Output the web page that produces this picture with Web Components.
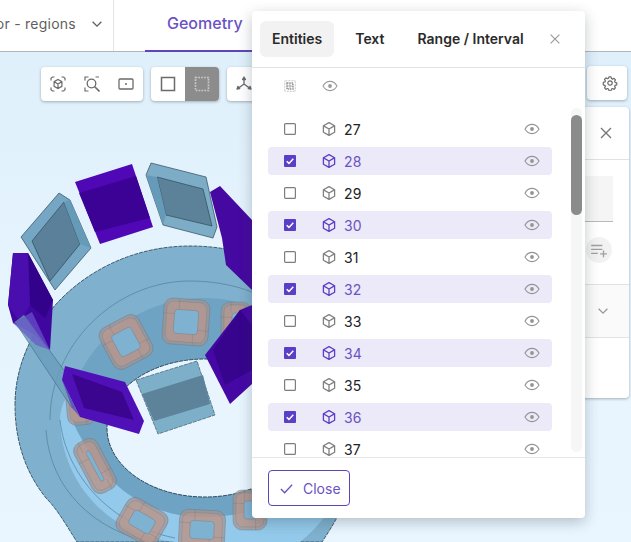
<!DOCTYPE html>
<html lang="en">
<head>
<meta charset="utf-8">
<title>Geometry</title>
<style>
  html, body { margin: 0; height: 100%; }
  body { font-family: Inter, "Liberation Sans", sans-serif; overflow: hidden; }
</style>
</head>
<body>
<app-shell></app-shell>
<script>
const ICONS = {
  cube: '<path d="M8 1.600l5.600 3.200v6.400L8 14.400l-5.600-3.200V4.800z M2.600 4.900L8 8l5.400-3.100 M8 8v6.200" fill="none" stroke="currentColor" stroke-width="1.300" stroke-linejoin="round"/>',
  eye: '<path d="M1 8c1.700-3 4.100-4.600 7-4.600s5.300 1.600 7 4.600c-1.700 3-4.100 4.600-7 4.600S2.700 11 1 8z" fill="none" stroke="currentColor" stroke-width="1.100"/><circle cx="8" cy="8" r="1.900" fill="currentColor"/>',
  close: '<path d="M3 3l10 10M13 3L3 13" fill="none" stroke="currentColor" stroke-width="1.400"/>',
  check: '<path d="M2 8.500l4 4L14 4" fill="none" stroke="currentColor" stroke-width="1.400"/>',
  chevron: '<path d="M3 5.500l5 5 5-5" fill="none" stroke="currentColor" stroke-width="1.500"/>',
  gear: '<path d="M6.800 1.300h2.400l.4 1.900 1.200.6 1.700-.9 1.600 1.700-1 1.600.5 1.200 1.900.5v2.300l-1.900.5-.5 1.200 1 1.600-1.600 1.700-1.700-.9-1.200.5-.4 1.900H6.800l-.4-1.900-1.200-.5-1.700.9-1.600-1.700 1-1.600-.5-1.200-1.900-.5V7.400l1.900-.5.500-1.200-1-1.600 1.600-1.700 1.700.9 1.200-.6z" transform="translate(.8 .7) scale(.9)" fill="none" stroke="currentColor" stroke-width="1.300" stroke-linejoin="round"/><circle cx="8" cy="8" r="2.200" fill="none" stroke="currentColor" stroke-width="1.200"/>',
  fitCube: '<path d="M1 4.500V2.200L2.500 1H4.500M11.500 1h2L15 2.200v2.300M15 11.500v2.300L13.500 15h-2M4.500 15h-2L1 13.800v-2.300" fill="none" stroke="currentColor" stroke-width="1.200"/><path d="M8 3.500l3.900 2.200v4.600L8 12.500l-3.900-2.200V5.700zM4.200 5.800L8 8l3.800-2.200M8 8v4.400" fill="none" stroke="currentColor" stroke-width="1.200"/>',
  zoomFit: '<path d="M1 4.500V1h3.500M11.500 1H15M1 11.500V15h3.500" fill="none" stroke="currentColor" stroke-width="1.200"/><circle cx="7.500" cy="7.500" r="4.300" fill="none" stroke="currentColor" stroke-width="1.300"/><path d="M10.700 10.700L15.500 15.500" fill="none" stroke="currentColor" stroke-width="1.600"/>',
  frame: '<rect x="1" y="3" width="14" height="10" rx="1" fill="none" stroke="currentColor" stroke-width="1.300"/><circle cx="8" cy="8" r="1" fill="currentColor"/>',
  solid: '<rect x="1.500" y="1.500" width="13" height="13" fill="none" stroke="currentColor" stroke-width="1.500"/>',
  dashed: '<rect x="1.500" y="1.500" width="13" height="13" fill="none" stroke="currentColor" stroke-width="1.700" stroke-dasharray="1.700 1.150"/>',
  dots: '<rect x="1" y="1" width="14" height="14" fill="none" stroke="currentColor" stroke-width="1" stroke-dasharray="1 1"/><path d="M4 4h8v8H4z" fill="none" stroke="currentColor" stroke-width="2.200" stroke-dasharray="2 1"/><path d="M4 8h8M8 4v8" stroke="currentColor" stroke-width="1"/>',
  axes: '<path d="M8 8V2M8 8l-6 4.500M8 8l6 4.500M8 1L6.500 3.500h3zM1 13l1-2.700 1.700 2.200zM15 13l-1-2.700-1.700 2.200z" fill="none" stroke="currentColor" stroke-width="1.300" stroke-linejoin="round"/>',
  addList: '<path d="M1 4h10M1 7.500h10M1 11h6M9 11.500h6M12 8.500v6" fill="none" stroke="currentColor" stroke-width="1.200"/>'
};

class UiIcon extends HTMLElement {
  connectedCallback() {
    const size = this.getAttribute('size') || 16;
    this.attachShadow({ mode: 'open' }).innerHTML = `
      <style>:host { display: inline-flex; flex: none; } svg { display: block; }</style>
      <svg width="${size}" height="${size}" viewBox="0 0 16 16">${ICONS[this.getAttribute('name')]}</svg>`;
  }
}

class AppHeader extends HTMLElement {
  constructor() {
    super();
    this.attachShadow({ mode: 'open' }).innerHTML = `
      <style>
        :host { display: flex; height: 51px; background: #fff; border-bottom: 1px solid #b4b6b8; box-sizing: content-box; }
        .select { width: 114px; flex: none; display: flex; justify-content: flex-end; align-items: center; gap: 14px;
                  padding-right: 9px; box-sizing: border-box; border-right: 1px solid #e4e4e4; overflow: hidden;
                  color: #5f5f5f; font-size: 14px; white-space: nowrap; letter-spacing: .25px; padding-bottom: 4px; }
        .tab { margin-left: 31px; width: 107px; padding-left: 22px; box-sizing: border-box; height: 52px; margin-bottom: -1px;
               border-bottom: 2px solid #5f45b8; color: #6a52c4; font-size: 16px; font-weight: 500; line-height: 47px; white-space: nowrap; }
      </style>
      <div class="select"><span>Color - regions</span><ui-icon name="chevron" size="14"></ui-icon></div>
      <div class="tab">Geometry</div>`;
  }
}

class ToolGroup extends HTMLElement {
  constructor() {
    super();
    this.attachShadow({ mode: 'open' }).innerHTML = `
      <style>
        :host { display: flex; height: 34px; background: #fff; border-radius: 4px; overflow: hidden; color: #666;
                box-shadow: 0 1px 3px rgba(60,70,80,.4); }
      </style>
      <slot></slot>`;
  }
}

class ToolButton extends HTMLElement {
  constructor() {
    super();
    this.attachShadow({ mode: 'open' }).innerHTML = `
      <style>
        :host { display: flex; width: 34px; height: 34px; align-items: center; justify-content: center; color: #6b6b6b; }
        :host([active]) { background: #8c8c8c; color: #c9c9c9; }
      </style>
      <slot></slot>`;
  }
}

class ModelView extends HTMLElement {
  constructor() {
    super();
    const coil = (x, y, w, h, r) => `<g transform="translate(${x} ${y}) rotate(${r})">
        <rect x="${-w/2}" y="${-h/2}" width="${w}" height="${h}" rx="9" fill="#a3928f" fill-opacity=".7" stroke="#6f6f78" stroke-opacity=".45" stroke-width=".8"/>
        <rect x="${-w/2+3}" y="${-h/2+3}" width="${w-6}" height="${h-6}" rx="7" fill="#c29a8c" fill-opacity=".6" stroke="#7c6f70" stroke-opacity=".35" stroke-width=".7"/>
        <rect x="${-w/2+11}" y="${-h/2+11}" width="${w-22}" height="${h-22}" rx="3" fill="#7fb2d0" stroke="#6f6a70" stroke-opacity=".45" stroke-width=".7"/>
        <path d="M${-w/2} ${-h/6}H${-w/2+11}M${w/2-11} ${h/6}H${w/2}M${-w/6} ${-h/2}V${-h/2+11}M${w/6} ${h/2-11}V${h/2}" stroke="#6f6a70" stroke-opacity=".35" stroke-width=".7"/>
      </g>`;
    this.attachShadow({ mode: 'open' }).innerHTML = `
      <style>
        :host { position: absolute; inset: 0; display: block; }
        svg { display: block; }
      </style>
      <svg width="631" height="490" viewBox="0 52 631 490">
        <!-- outer ring -->
        <path d="M15 405C15 322 92 246 190 246C285 246 350 305 362 400C367 460 350 500 322 542H77C66 525 58 510 46 498C25 472 15 440 15 405Z" fill="#7fb0cd" stroke="#27404f" stroke-width=".8" stroke-dasharray="4 1"/>
        <path d="M50 420C50 345 115 281 190 281C270 281 330 330 345 400" fill="none" stroke="#55809b" stroke-width=".7"/>
        <path d="M46 430C50 490 95 530 150 542" fill="none" stroke="#55809b" stroke-width=".7"/>
        <!-- inner wall, light crescent and rim round the hole -->
        <path d="M60 420C62 485 110 535 175 542H300C340 510 350 470 345 420C300 330 190 320 130 350C90 370 60 390 60 420Z" fill="#93c9ea"/>
        <path d="M70 400C85 340 140 298 205 298C270 298 325 345 330 428C325 480 275 517 205 517C150 517 112 490 88 450C76 430 68 415 70 400Z" fill="#6fa3c3"/>
        <path d="M60 420C66 475 110 525 175 538" fill="none" stroke="#53809c" stroke-width=".7"/>
        <!-- hole -->
        <ellipse cx="205" cy="428" rx="98" ry="69" fill="#e8f5fe" stroke="#1f3a4b" stroke-width=".9" stroke-dasharray="4 1"/>
        <!-- coils -->
        ${coil(186, 322, 46, 46, 4)}
        ${coil(126, 342, 44, 46, -28)}
        ${coil(236, 325, 30, 46, 0)}
        ${coil(80, 400, 28, 50, -5)}
        ${coil(95, 466, 26, 56, -28)}
        ${coil(142, 522, 46, 38, 30)}
        ${coil(202, 530, 46, 40, 3)}
        ${coil(250, 510, 34, 40, 0)}
        <!-- top blue blocks -->
        <g stroke="#2f4a5a" stroke-width=".7">
          <path d="M59 193L70 200L91 248L55 290L21 237Z" fill="#75a6c3"/>
          <path d="M32 241L64 202L80 244L50 281Z" fill="#5a8199"/>
          <path d="M64 202L70 200L91 248L80 244Z" fill="#659ab8" stroke="none"/>
          <path d="M151 163L206 177L217 227L213 238L163 225L146 175Z" fill="#7dacc7"/>
          <path d="M157 177L203 189L212 226L166 215Z" fill="#5b8299"/>
          <path d="M146 175L157 177L166 215L163 225Z" fill="#659ab8" stroke="none"/>
        </g>
        <!-- purple blocks -->
        <path d="M75 182L132 164L153 227L100 244Z" fill="#5008b6"/>
        <path d="M79 193L136 176L150 218L95 232Z" fill="#3c0296"/>
        <path d="M210 192L220 186L252 220V290L226 265L222 238Z" fill="#4508a0"/>
        <path d="M13 253H28L53 300L50 350L35 335L13 323L8 305Z" fill="#3f06a0"/>
        <path d="M28 253L53 300L45 318L30 305Z" fill="#33028a"/>
        <path d="M13 253L28 253L30 305L20 322L8 305Z" fill="#4a0eaf"/>
        <path d="M240 310L252 305V384L230 404L205 355Z" fill="#4508a5"/>
        <path d="M240 310L252 325V370L225 385L213 350Z" fill="#36048d"/>
        <!-- thin plate on the left -->
        <path d="M15 322L24 315L84 398L72 408Z" fill="#6b9dbc" fill-opacity=".85" stroke="#40697f" stroke-width=".6"/>
        <path d="M13 323L32 312L50 350L36 345Z" fill="#6a55c8" fill-opacity=".7"/>
        <!-- lower purple block -->
        <path d="M65 366L125 382L144 421L139 434L80 417L62 380Z" fill="#5010b8"/>
        <path d="M72 374L122 392L134 420L84 408Z" fill="#3c058f"/>
        <path d="M62 380L80 417L72 408Z" fill="#5a4ac0" fill-opacity=".8"/>
        <!-- front blue block -->
        <path d="M136 380L197 361L215 415L158 434Z" fill="#7eafc9" stroke="#2f4a5a" stroke-width=".6" stroke-dasharray="4 1"/>
        <path d="M142 394L203 375L210 404L154 421Z" fill="#5c8399"/>
      </svg>`;
  }
}

class SidePanel extends HTMLElement {
  constructor() {
    super();
    this.attachShadow({ mode: 'open' }).innerHTML = `
      <style>
        :host { position: absolute; left: 560px; top: 55px; width: 69px; height: 291px; display: flex; flex-direction: column;
                background: #fff; border-radius: 4px; box-shadow: 0 1px 3px rgba(60,70,80,.4); color: #777; }
        .top { height: 53px; flex: none; box-sizing: border-box; border-bottom: 1px solid #e2e2e2; display: flex; justify-content: flex-end;
               align-items: center; padding-right: 15px; }
        .form { height: 125px; flex: none; box-sizing: border-box; border-bottom: 1px solid #e2e2e2; position: relative; padding-top: 16px; }
        .input { width: 53px; height: 46px; background: #f5f5f5; border-bottom: 1px solid #b9b9b9; box-sizing: border-box; }
        .add { position: absolute; left: 26px; top: 77px; width: 26px; height: 26px; border-radius: 50%; background: #f2f2f2;
               display: flex; align-items: center; justify-content: center; color: #a0a0a0; }
        .section { height: 53px; flex: none; box-sizing: border-box; border-bottom: 1px solid #e2e2e2; background: #fafafa; display: flex;
                   justify-content: flex-end; align-items: center; padding-right: 19px; color: #999; }
      </style>
      <div class="top"><ui-icon name="close" size="16"></ui-icon></div>
      <div class="form"><div class="input"></div><div class="add"><ui-icon name="addList" size="18"></ui-icon></div></div>
      <div class="section"><ui-icon name="chevron" size="14"></ui-icon></div>`;
  }
}

class EntityRow extends HTMLElement {
  constructor() {
    super();
    const label = this.getAttribute('label');
    const checkbox = this.hasAttribute('checked')
      ? '<svg width="12" height="12" viewBox="0 0 12 12"><rect width="12" height="12" rx="1" fill="#5a3fc6"/><path d="M2.700 6.200l2.300 2.200 4.300-4.700" fill="none" stroke="#fff" stroke-width="1.500"/></svg>'
      : '<svg width="12" height="12" viewBox="0 0 12 12"><rect x=".6" y=".6" width="10.800" height="10.800" rx="1" fill="#fff" stroke="#7d7d7d" stroke-width="1.200"/></svg>';
    this.attachShadow({ mode: 'open' }).innerHTML = `
      <style>
        :host { display: flex; align-items: center; width: 284px; height: 28px; flex: none; border-radius: 4px; padding-left: 16px;
                box-sizing: border-box; color: #222; font-size: 14px; }
        :host([checked]) { background: #ece9f8; color: #6a52c4; }
        svg { display: block; flex: none; }
        .cube { margin-left: 25px; color: #808080; width: 16px; display: flex; }
        :host([checked]) .cube { color: #5a3fc6; }
        .label { margin-left: 7px; flex: 1; letter-spacing: .2px; padding-top: 1px; }
        .eye { margin-right: 12px; color: #949494; display: flex; }
      </style>
      ${checkbox}
      <span class="cube"><ui-icon name="cube"></ui-icon></span>
      <span class="label">${label}</span>
      <span class="eye"><ui-icon name="eye"></ui-icon></span>`;
  }
}

class EntityPanel extends HTMLElement {
  constructor() {
    super();
    let rows = '';
    for (let n = 27; n <= 37; n++) {
      rows += `<entity-row label="${n}" ${n % 2 === 0 ? 'checked' : ''}></entity-row>`;
    }
    this.attachShadow({ mode: 'open' }).innerHTML = `
      <style>
        :host { position: absolute; left: 252px; top: 11px; width: 333px; height: 507px; display: flex; flex-direction: column;
                background: #fff; border-radius: 4px; box-shadow: 0 4px 14px rgba(40,50,60,.28); color: #2a2a2a; }
        .tabs { height: 57px; flex: none; box-sizing: border-box; border-bottom: 1px solid #e3e3e3; display: flex; align-items: flex-start;
                padding: 10px 0 0 8px; font-size: 14px; font-weight: 600; }
        .tab { height: 36px; line-height: 36px; padding: 0 12px; border-radius: 6px; white-space: nowrap; }
        .tab.on { background: #f2f2f2; }
        .tab:nth-child(2) { margin-left: 9px; }
        .tab:nth-child(3) { margin-left: 9px; }
        .x { margin-left: 12px; margin-top: 11px; color: #9a9a9a; display: flex; }
        .all { height: 38px; box-sizing: border-box; padding: 0 0 2px 32px; flex: none; display: flex; align-items: center; color: #9a9a9a; }
        .all ui-icon + ui-icon { margin-left: 26px; }
        .body { flex: 1; min-height: 0; display: flex; position: relative; }
        .list { flex: 1; min-width: 0; overflow: hidden; display: flex; flex-direction: column; gap: 4px; padding: 9px 0 0 16px; }
        .track { width: 11px; flex: none; background: #f6f6f6; border-radius: 6px; margin: 2px 3px 5px 0; padding-top: 7px; box-sizing: border-box; }
        .thumb { height: 100px; border-radius: 6px; background: #8b8b8b; }
        .foot { height: 61px; flex: none; box-sizing: border-box; border-top: 1px solid #e6e6e6; padding: 12px 16px; }
        .close { width: 82px; height: 36px; box-sizing: border-box; border: 1px solid #5f45b8; border-radius: 4px; color: #6a52c4;
                 font-size: 14px; display: flex; align-items: center; padding-left: 10px; gap: 9px; }
      </style>
      <div class="tabs">
        <div class="tab on">Entities</div>
        <div class="tab">Text</div>
        <div class="tab">Range / Interval</div>
        <span class="x"><ui-icon name="close" size="14"></ui-icon></span>
      </div>
      <div class="all"><ui-icon name="dots" size="12"></ui-icon><ui-icon name="eye"></ui-icon></div>
      <div class="body">
        <div class="list">${rows}</div>
        <div class="track"><div class="thumb"></div></div>
      </div>
      <div class="foot"><div class="close"><ui-icon name="check" size="15"></ui-icon><span>Close</span></div></div>`;
  }
}

class AppShell extends HTMLElement {
  constructor() {
    super();
    this.attachShadow({ mode: 'open' }).innerHTML = `
      <style>
        :host { display: flex; flex-direction: column; position: relative; width: 631px; height: 542px; overflow: hidden; }
        .canvas { flex: 1; position: relative; background: linear-gradient(180deg, #dff0fb 0%, #e6f4fd 55%, #e9f6ff 100%); overflow: hidden; }
        .tools { position: relative; display: flex; gap: 8px; padding: 15px 0 0 41px; }
        .gear { position: absolute; left: 587px; top: 14px; width: 40px; }
      </style>
      <app-header></app-header>
      <div class="canvas">
        <model-view></model-view>
        <div class="tools">
          <tool-group>
            <tool-button><ui-icon name="fitCube"></ui-icon></tool-button>
            <tool-button><ui-icon name="zoomFit"></ui-icon></tool-button>
            <tool-button><ui-icon name="frame"></ui-icon></tool-button>
          </tool-group>
          <tool-group>
            <tool-button><ui-icon name="solid"></ui-icon></tool-button>
            <tool-button active><ui-icon name="dashed"></ui-icon></tool-button>
          </tool-group>
          <tool-group>
            <tool-button><ui-icon name="axes"></ui-icon></tool-button>
          </tool-group>
        </div>
        <tool-group class="gear"><tool-button style="margin-left:6px"><ui-icon name="gear"></ui-icon></tool-button></tool-group>
        <side-panel></side-panel>
      </div>
      <entity-panel></entity-panel>`;
  }
}

customElements.define('ui-icon', UiIcon);
customElements.define('app-header', AppHeader);
customElements.define('tool-group', ToolGroup);
customElements.define('tool-button', ToolButton);
customElements.define('model-view', ModelView);
customElements.define('side-panel', SidePanel);
customElements.define('entity-row', EntityRow);
customElements.define('entity-panel', EntityPanel);
customElements.define('app-shell', AppShell);
</script>
</body>
</html>
